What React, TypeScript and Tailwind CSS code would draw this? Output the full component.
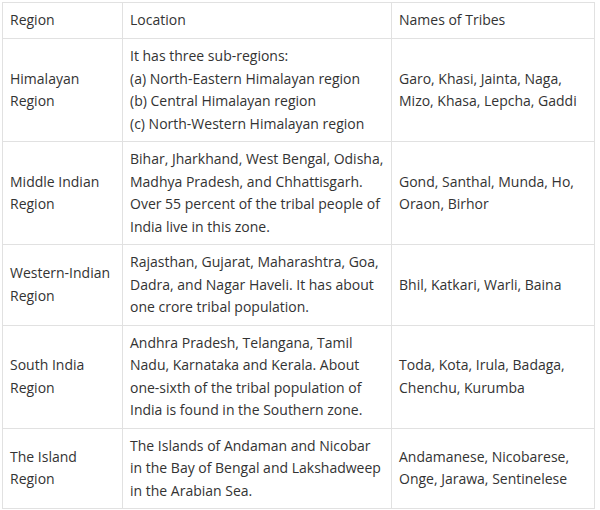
import React from "react";

const rows: { region: string[]; location: string[]; tribes: string[] }[] = [
  {
    region: ["Himalayan", "Region"],
    location: [
      "It has three sub-regions:",
      "(a) North-Eastern Himalayan region",
      "(b) Central Himalayan region",
      "(c) North-Western Himalayan region",
    ],
    tribes: ["Garo, Khasi, Jainta, Naga,", "Mizo, Khasa, Lepcha, Gaddi"],
  },
  {
    region: ["Middle Indian", "Region"],
    location: [
      "Bihar, Jharkhand, West Bengal, Odisha,",
      "Madhya Pradesh, and Chhattisgarh.",
      "Over 55 percent of the tribal people of",
      "India live in this zone.",
    ],
    tribes: ["Gond, Santhal, Munda, Ho,", "Oraon, Birhor"],
  },
  {
    region: ["Western-Indian", "Region"],
    location: [
      "Rajasthan, Gujarat, Maharashtra, Goa,",
      "Dadra, and Nagar Haveli. It has about",
      "one crore tribal population.",
    ],
    tribes: ["Bhil, Katkari, Warli, Baina"],
  },
  {
    region: ["South India", "Region"],
    location: [
      "Andhra Pradesh, Telangana, Tamil",
      "Nadu, Karnataka and Kerala. About",
      "one-sixth of the tribal population of",
      "India is found in the Southern zone.",
    ],
    tribes: ["Toda, Kota, Irula, Badaga,", "Chenchu, Kurumba"],
  },
  {
    region: ["The Island", "Region"],
    location: [
      "The Islands of Andaman and Nicobar",
      "in the Bay of Bengal and Lakshadweep",
      "in the Arabian Sea.",
    ],
    tribes: ["Andamanese, Nicobarese,", "Onge, Jarawa, Sentinelese"],
  },
];

function Lines({ lines }: { lines: string[] }) {
  return (
    <>
      {lines.map((l, i) => (
        <div key={i} className="whitespace-nowrap">
          {l}
        </div>
      ))}
    </>
  );
}

export default function App() {
  return (
    <div className="w-[600px] h-[510px] bg-white pl-[2px] pt-[2px]" style={{ fontFamily: '"Open Sans", "Noto Sans", sans-serif' }}>
      <table className="table-fixed border-collapse w-[592px] text-[14px] leading-[22.5px] text-[#333333]">
        <colgroup>
          <col className="w-[120px]" />
          <col className="w-[269px]" />
          <col className="w-[203px]" />
        </colgroup>
        <tbody>
          <tr className="h-[36px]">
            <td className="border border-[#e1e1e1] px-[7px] py-[6px] align-middle">Region</td>
            <td className="border border-[#e1e1e1] px-[7px] py-[6px] align-middle">Location</td>
            <td className="border border-[#e1e1e1] px-[7px] py-[6px] align-middle">Names of Tribes</td>
          </tr>
          {rows.map((r, i) => (
            <tr key={i}>
              <td className="border border-[#e1e1e1] px-[7px] py-[6px] align-middle">
                <Lines lines={r.region} />
              </td>
              <td className="border border-[#e1e1e1] px-[7px] py-[6px] align-middle">
                <Lines lines={r.location} />
              </td>
              <td className="border border-[#e1e1e1] px-[7px] py-[6px] align-middle">
                <Lines lines={r.tribes} />
              </td>
            </tr>
          ))}
        </tbody>
      </table>
    </div>
  );
}
